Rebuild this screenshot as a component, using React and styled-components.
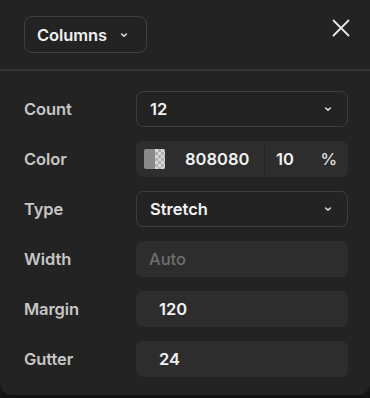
import React from "react";
import styled, { createGlobalStyle } from "styled-components";

const GlobalStyle = createGlobalStyle`
  html, body {
    margin: 0;
    padding: 0;
    background: #141414;
    font-family: Inter, "Noto Sans", sans-serif;
  }
`;

const rows = [
  { label: "Count", kind: "select", value: "12" },
  { label: "Color", kind: "color", value: "808080", opacity: "10" },
  { label: "Type", kind: "select", value: "Stretch" },
  { label: "Width", kind: "input", value: "Auto", muted: true },
  { label: "Margin", kind: "input", value: "120", indent: true },
  { label: "Gutter", kind: "input", value: "24", indent: true },
];

const Chevron = ({ size = 10 }) => (
  <svg width={size} height={size} viewBox="0 0 10 10">
    <path
      d="M2.6 4 L5 6.2 L7.4 4"
      fill="none"
      stroke="#d8d8d8"
      strokeWidth="1.6"
      strokeLinecap="round"
      strokeLinejoin="round"
    />
  </svg>
);

const CloseIcon = () => (
  <svg width="20" height="20" viewBox="0 0 20 20">
    <path
      d="M2.5 2.5 L17.5 17.5 M17.5 2.5 L2.5 17.5"
      stroke="#e6e6e6"
      strokeWidth="1.8"
      strokeLinecap="round"
    />
  </svg>
);

const App = () => {
  return (
    <>
      <GlobalStyle />
      <Panel>
        <Header>
          <ModeButton>
            Columns
            <Chevron />
          </ModeButton>
          <CloseButton>
            <CloseIcon />
          </CloseButton>
        </Header>
        <Body>
          {rows.map((row) => (
            <Row key={row.label}>
              <Label>{row.label}</Label>
              {row.kind === "select" && (
                <SelectBox>
                  <Value>{row.value}</Value>
                  <Chevron />
                </SelectBox>
              )}
              {row.kind === "color" && (
                <FilledBox>
                  <Swatch>
                    <SwatchSolid />
                    <SwatchChecker />
                  </Swatch>
                  <HexValue>{row.value}</HexValue>
                  <Split />
                  <Opacity>{row.opacity}</Opacity>
                  <Percent>%</Percent>
                </FilledBox>
              )}
              {row.kind === "input" && (
                <FilledBox>
                  <Value $muted={row.muted} $indent={row.indent}>
                    {row.value}
                  </Value>
                </FilledBox>
              )}
            </Row>
          ))}
        </Body>
      </Panel>
    </>
  );
};

const Panel = styled.div`
  width: 370px;
  height: 395px;
  background: #232323;
  border-radius: 0 0 12px 12px;
  display: flex;
  flex-direction: column;
  overflow: hidden;
`;

const Header = styled.div`
  height: 71px;
  box-sizing: border-box;
  padding: 16px 19px 0 24px;
  display: flex;
  align-items: flex-start;
  justify-content: space-between;
  border-bottom: 2px solid #363636;
`;

const ModeButton = styled.div`
  width: 123px;
  height: 37px;
  box-sizing: border-box;
  border: 1.5px solid #3f3f3f;
  border-radius: 8px;
  display: flex;
  align-items: center;
  gap: 12px;
  padding-left: 12px;
  color: #f0f0f0;
  font-size: 16.5px;
  font-weight: 600;
  letter-spacing: -0.1px;
`;

const CloseButton = styled.div`
  width: 20px;
  height: 20px;
  margin-top: 2px;
  display: flex;
`;

const Body = styled.div`
  padding: 20px 22px 0 24px;
  display: flex;
  flex-direction: column;
  gap: 14px;
`;

const Row = styled.div`
  display: grid;
  grid-template-columns: 112px 1fr;
  align-items: center;
  height: 36px;
`;

const Label = styled.div`
  color: #c6c6c6;
  font-size: 16.5px;
  font-weight: 600;
  letter-spacing: -0.1px;
`;

const SelectBox = styled.div`
  height: 36px;
  box-sizing: border-box;
  border: 1.5px solid #3d3d3d;
  border-radius: 7px;
  display: flex;
  align-items: center;
  justify-content: space-between;
  padding: 0 14px 0 13px;
`;

const FilledBox = styled.div`
  height: 36px;
  box-sizing: border-box;
  background: #2d2d2d;
  border-radius: 7px;
  display: flex;
  align-items: center;
  padding: 0 11px 0 8px;
  color: #f0f0f0;
  font-size: 16.5px;
  font-weight: 600;
`;

const Value = styled.span`
  color: ${(p) => (p.$muted ? "#6e6e6e" : "#f2f2f2")};
  font-size: 16.5px;
  font-weight: ${(p) => (p.$muted ? 500 : 600)};
  padding-left: ${(p) => (p.$indent ? "15px" : p.$muted ? "5px" : "0")};
`;

const Swatch = styled.div`
  width: 21px;
  height: 20px;
  border-radius: 2px;
  overflow: hidden;
  display: flex;
  margin-right: 20px;
`;

const SwatchSolid = styled.div`
  width: 50%;
  background: #8a8a8a;
`;

const SwatchChecker = styled.div`
  width: 50%;
  background-color: #d8d8d8;
  background-image: linear-gradient(45deg, #b0b0b0 25%, transparent 25%, transparent 75%, #b0b0b0 75%),
    linear-gradient(45deg, #b0b0b0 25%, transparent 25%, transparent 75%, #b0b0b0 75%);
  background-size: 6px 6px;
  background-position: 0 0, 3px 3px;
`;

const HexValue = styled.span`
  width: 79px;
`;

const Split = styled.div`
  width: 1px;
  align-self: stretch;
  background: #262626;
  margin-right: 11px;
`;

const Opacity = styled.span`
  flex: 1;
`;

const Percent = styled.span`
  color: #d8d8d8;
`;

export default App;
